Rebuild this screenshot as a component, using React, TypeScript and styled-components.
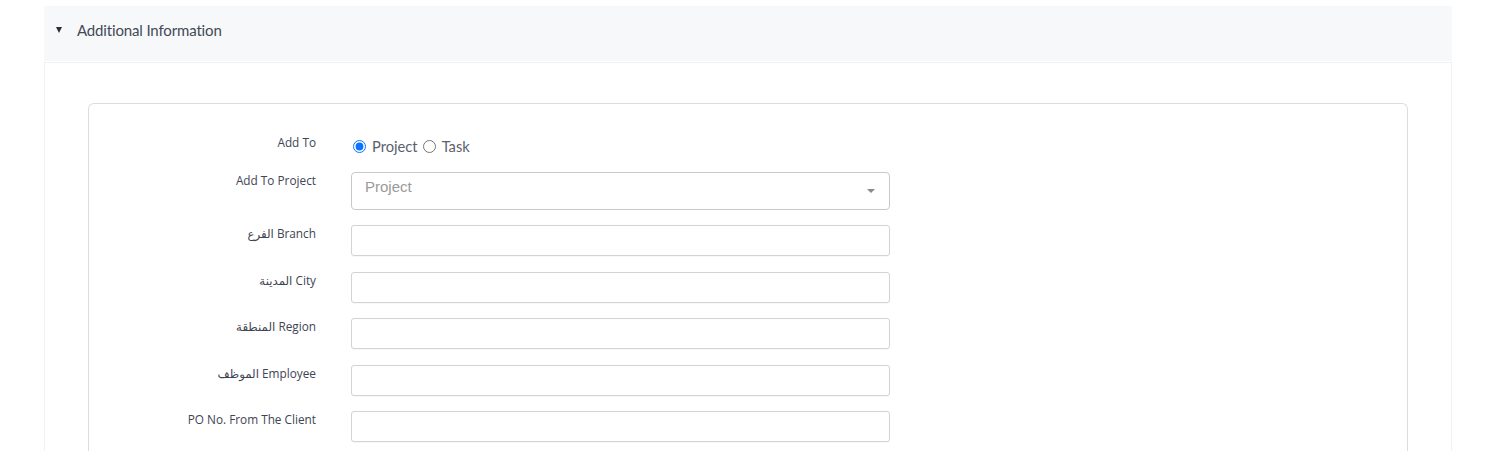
import React from "react";
import styled, { createGlobalStyle } from "styled-components";

const Global = createGlobalStyle`
  html, body { margin: 0; padding: 0; background: #ffffff; }
  body { font-family: "Lato", "Noto Sans", "DejaVu Sans", sans-serif; }
  * { box-sizing: border-box; }
`;

const Page = styled.div`
  width: 1497px;
  height: 451px;
  overflow: hidden;
  padding: 6px 45px 0 44px;
`;

const Header = styled.div`
  height: 55px;
  background: #f7f8fa;
  display: flex;
  align-items: center;
  padding: 0 0 7px 12px;
  gap: 15px;
`;

const Caret = styled.span`
  width: 0;
  height: 0;
  border-left: 3.5px solid transparent;
  border-right: 3.5px solid transparent;
  border-top: 6px solid #2b2f36;
  margin-top: -1px;
`;

const HeaderTitle = styled.span`
  font-family: "Lato", "Noto Sans", sans-serif;
  font-size: 15px;
  color: #424a57;
  letter-spacing: -0.15px;
`;

const Panel = styled.div`
  margin-top: 1px;
  border: 1px solid #f0f1f3;
  border-bottom: none;
  padding: 40px 43px 0 43px;
`;

const Card = styled.div`
  border: 1px solid #dcdddf;
  border-bottom: none;
  border-radius: 6px 6px 0 0;
  padding-top: 30px;
  height: 400px;
  display: flex;
  flex-direction: column;
  gap: 15.5px;
`;

const Row = styled.div<{ $h: number }>`
  display: grid;
  grid-template-columns: 227px 539px;
  column-gap: 35px;
  align-items: start;
  height: ${(p) => p.$h}px;
`;

const Label = styled.label`
  text-align: right;
  font-family: "Open Sans", "Noto Sans", "DejaVu Sans", sans-serif;
  font-size: 11.8px;
  line-height: 16px;
  color: #3e4553;
`;

const RadioGroup = styled.div`
  display: flex;
  align-items: center;
  height: 24px;
  font-family: "Lato", "Noto Sans", sans-serif;
  font-size: 14.7px;
  color: #5a616d;
`;

const Radio = styled.input`
  width: 13px;
  height: 13px;
  margin: 0 6px 0 2px;
  accent-color: #0a74ff;
`;

const RadioText = styled.span`
  margin-right: 3px;
`;

const SelectBox = styled.div`
  position: relative;
  height: 38px;
  border: 1px solid #c9c9c9;
  border-radius: 4px;
  padding: 5px 13px;
  font-family: "Liberation Sans", Arial, sans-serif;
  font-size: 15px;
  color: #9a9a9a;
`;

const SelectArrow = styled.span`
  position: absolute;
  right: 14px;
  top: 16px;
  width: 0;
  height: 0;
  border-left: 4px solid transparent;
  border-right: 4px solid transparent;
  border-top: 4px solid #8a8a8a;
`;

const TextInput = styled.input`
  height: 31px;
  width: 539px;
  border: 1px solid #d3d3d3;
  border-radius: 3px;
  padding: 4px 10px;
  font-size: 14px;
  box-shadow: 0 1px 1px rgba(0, 0, 0, 0.03);
  outline: none;
`;

const textFields = [
  "الفرع Branch",
  "المدينة City",
  "المنطقة Region",
  "الموظف Employee",
  "PO No. From The Client",
];

export default function App() {
  return (
    <>
      <Global />
      <Page>
        <Header>
          <Caret />
          <HeaderTitle>Additional Information</HeaderTitle>
        </Header>
        <Panel>
          <Card>
            <Row $h={22}>
              <Label>Add To</Label>
              <RadioGroup>
                <Radio type="radio" name="addto" defaultChecked />
                <RadioText>Project</RadioText>
                <Radio type="radio" name="addto" />
                <RadioText>Task</RadioText>
              </RadioGroup>
            </Row>
            <Row $h={38}>
              <Label>Add To Project</Label>
              <SelectBox>
                Project
                <SelectArrow />
              </SelectBox>
            </Row>
            {textFields.map((f) => (
              <Row $h={31} key={f}>
                <Label>{f}</Label>
                <TextInput type="text" />
              </Row>
            ))}
          </Card>
        </Panel>
      </Page>
    </>
  );
}
